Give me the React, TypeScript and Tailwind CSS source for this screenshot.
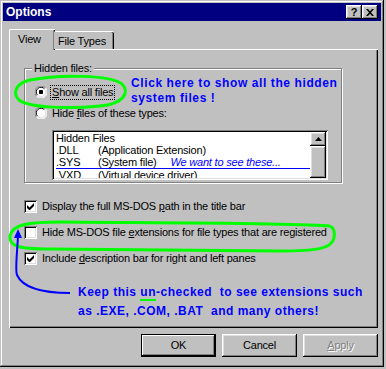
import React from "react";

const raised =
  "shadow-[inset_-1px_-1px_#000,inset_1px_1px_#fff,inset_-2px_-2px_#808080,inset_2px_2px_#dfdfdf]";
const sunken =
  "shadow-[inset_1px_1px_#808080,inset_-1px_-1px_#fff,inset_2px_2px_#000,inset_-2px_-2px_#dfdfdf]";

function Radio({ checked }: { checked?: boolean }) {
  return (
    <svg width="12" height="12" viewBox="0 0 12 12" className="shrink-0">
      <circle cx="6" cy="6" r="5.5" fill="#fff" />
      <path d="M10.5 1.8 A5.5 5.5 0 0 0 1.5 10.2" stroke="#808080" strokeWidth="1" fill="none" />
      <path d="M9.5 2.8 A4.3 4.3 0 0 0 2.5 9.2" stroke="#000" strokeWidth="1" fill="none" />
      <path d="M1.5 10.2 A5.5 5.5 0 0 0 10.5 1.8" stroke="#fff" strokeWidth="1" fill="none" />
      <path d="M2.5 9.2 A4.3 4.3 0 0 0 9.5 2.8" stroke="#dfdfdf" strokeWidth="1" fill="none" />
      {checked && <rect x="4" y="4" width="4" height="4" rx="1" fill="#000" />}
    </svg>
  );
}

function Check({ checked }: { checked?: boolean }) {
  return (
    <div className={`w-[13px] h-[13px] shrink-0 bg-white ${sunken} flex items-center justify-center`}>
      {checked && (
        <svg width="7" height="7" viewBox="0 0 7 7">
          <path d="M0 2v3l2 2h1l4-4V0L2.5 4.5z" fill="#000" />
        </svg>
      )}
    </div>
  );
}

function Btn({ children, def, disabled }: { children: React.ReactNode; def?: boolean; disabled?: boolean }) {
  return (
    <div
      className={`w-[75px] h-[23px] flex items-center justify-center ${
        def
          ? "shadow-[inset_0_0_0_1px_#000,inset_-2px_-2px_#000,inset_2px_2px_#fff,inset_-3px_-3px_#808080]"
          : raised
      } ${disabled ? "text-[#808080] [text-shadow:1px_1px_#fff]" : "text-black"}`}
    >
      {children}
    </div>
  );
}

export default function App() {
  return (
    <div className="w-[386px] h-[369px] bg-[#c0c0c0] relative font-['Liberation_Sans',Arial,sans-serif] text-[11px] leading-[13px] tracking-[-0.2px] text-black overflow-hidden">
      <div className="w-[384px] h-[367px] p-[3px] flex flex-col shadow-[inset_-1px_-1px_#000,inset_1px_1px_#c0c0c0,inset_-2px_-2px_#808080,inset_2px_2px_#fff]">
        {/* Title bar */}
        <div className="h-[18px] bg-[#000080] flex items-center pl-[3px] pr-[3px]">
          <span className="text-white font-bold text-[12px] tracking-normal flex-1">Options</span>
          <div className={`w-[16px] h-[14px] bg-[#c0c0c0] ${raised} flex items-center justify-center font-bold text-[11px]`}>?</div>
          <div className={`w-[16px] h-[14px] bg-[#c0c0c0] ${raised} flex items-center justify-center`}>
            <svg width="8" height="7" viewBox="0 0 8 7">
              <path d="M0 0h2l2 2.2L6 0h2L5 3.5 8 7H6L4 4.8 2 7H0l3-3.5z" fill="#000" />
            </svg>
          </div>
        </div>

        {/* Tabs */}
        <div className="pl-[6px] pt-[8px]">
          <div className="flex items-end h-[20px] relative z-10">
            <div className="w-[46px] h-[21px] -mb-[1px] bg-[#c0c0c0] border-l border-t border-white rounded-tl-[2px] shadow-[inset_-1px_0_#000,inset_-2px_0_#808080] pl-[8px] pt-[3px]">
              View
            </div>
            <div className="w-[60px] h-[18px] bg-[#c0c0c0] border-t border-white rounded-tl-[2px] rounded-tr-[2px] shadow-[inset_-1px_0_#000,inset_-2px_0_#808080] pl-[4px] pt-[3px] -ml-[1px]">
              File Types
            </div>
          </div>
          {/* Panel */}
          <div className="w-[369px] h-[279px] border-l border-t border-white shadow-[inset_-1px_-1px_#000,inset_-2px_-2px_#808080] flex flex-col pl-[14px] pt-[18px]">
            {/* Group */}
            <div className="w-[318px] h-[115px] border border-[#808080] shadow-[inset_1px_1px_#fff,1px_1px_#fff] relative flex flex-col pl-[10px] pt-[17px]">
              <span className="absolute -top-[7px] left-[7px] px-[2px] bg-[#c0c0c0]">Hidden files:</span>
              <div className="flex items-center h-[12px] gap-[4px]">
                <Radio checked />
                <span className="outline outline-1 outline-dotted outline-black px-[1px]">
                  <u>S</u>how all files
                </span>
              </div>
              <div className="flex items-center h-[12px] gap-[4px] mt-[9px]">
                <Radio />
                <span className="px-[1px]">
                  Hide <u>f</u>iles of these types:
                </span>
              </div>
              <div className={`ml-[17px] mt-[11px] w-[276px] h-[50px] bg-white ${sunken} p-[2px] flex`}>
                <div className="flex-1 flex flex-col pl-[2px] overflow-hidden leading-[12px]">
                  <div>Hidden Files</div>
                  <div className="flex"><span className="w-[42px]">.DLL</span><span>(Application Extension)</span></div>
                  <div className="flex border-b border-[#0000ff]"><span className="w-[42px]">.SYS</span><span>(System file)</span><span className="ml-[14px] italic text-[#0000ff]">We want to see these...</span></div>
                  <div className="flex"><span className="w-[42px]">.VXD</span><span>(Virtual device driver)</span></div>
                </div>
                <div className="w-[16px] flex flex-col bg-[#c0c0c0]">
                  <div className={`h-[14px] ${raised} flex items-center justify-center`}>
                    <svg width="7" height="4" viewBox="0 0 7 4"><path d="M3.5 0L7 4H0z" fill="#000" /></svg>
                  </div>
                  <div className={`flex-1 ${raised}`} />
                </div>
              </div>
            </div>
            {/* Checkboxes */}
            <div className="flex items-center gap-[5px] mt-[17px] h-[13px]">
              <Check checked />
              <span>Display the full MS-DOS <u>p</u>ath in the title bar</span>
            </div>
            <div className="flex items-center gap-[5px] mt-[13px] h-[13px]">
              <Check />
              <span>Hide MS-DOS file <u>e</u>xtensions for file types that are registered</span>
            </div>
            <div className="flex items-center gap-[5px] mt-[13px] h-[13px]">
              <Check checked />
              <span>Include <u>d</u>escription bar for right and left panes</span>
            </div>
            <div className="ml-[54px] mt-[18px] text-[#0000ff] font-bold text-[12px] leading-[19px] whitespace-pre tracking-[0.5px]">
              <div>
                Keep this <span className="relative">un<span className="absolute left-0 right-0 bottom-[-2px] h-[2px] bg-[#00ff00]" /></span>-checked  to see extensions such
              </div>
              <div>as .EXE, .COM, .BAT  and many others!</div>
            </div>
          </div>
        </div>

        {/* Buttons */}
        <div className="flex justify-end gap-[6px] mt-[6px] pr-[3px]">
          <Btn def>OK</Btn>
          <Btn>Cancel</Btn>
          <Btn disabled>
            <span><u>A</u>pply</span>
          </Btn>
        </div>
      </div>

      {/* Annotations */}
      <div className="absolute left-[131px] top-[76px] text-[#0000ff] font-bold text-[12px] leading-[15px] tracking-[0.6px] whitespace-pre">
        <div>Click here to show all the hidden</div>
        <div>system files !</div>
      </div>
      <svg className="absolute inset-0 pointer-events-none" width="386" height="369" viewBox="0 0 386 369">
        <path
          d="M30 80 C60 74 110 75 122 84 C130 92 124 104 100 106 C70 109 30 108 19 100 C12 93 16 83 30 80 Z"
          fill="none"
          stroke="#00ff00"
          strokeWidth="3"
        />
        <path
          d="M330 226 C300 223 200 223 60 222 C30 222 12 224 10 236 C9 246 18 249 50 249 L280 251 C315 251 332 249 334 238 C335 232 334 228 330 226"
          fill="none"
          stroke="#00ff00"
          strokeWidth="3"
        />
        <path d="M18 236 C17 255 15 270 17 275 C22 286 38 293 70 293" fill="none" stroke="#0000ff" strokeWidth="2" />
        <path d="M18 229 L14 238 L22 238 Z" fill="#0000ff" />
      </svg>
    </div>
  );
}
